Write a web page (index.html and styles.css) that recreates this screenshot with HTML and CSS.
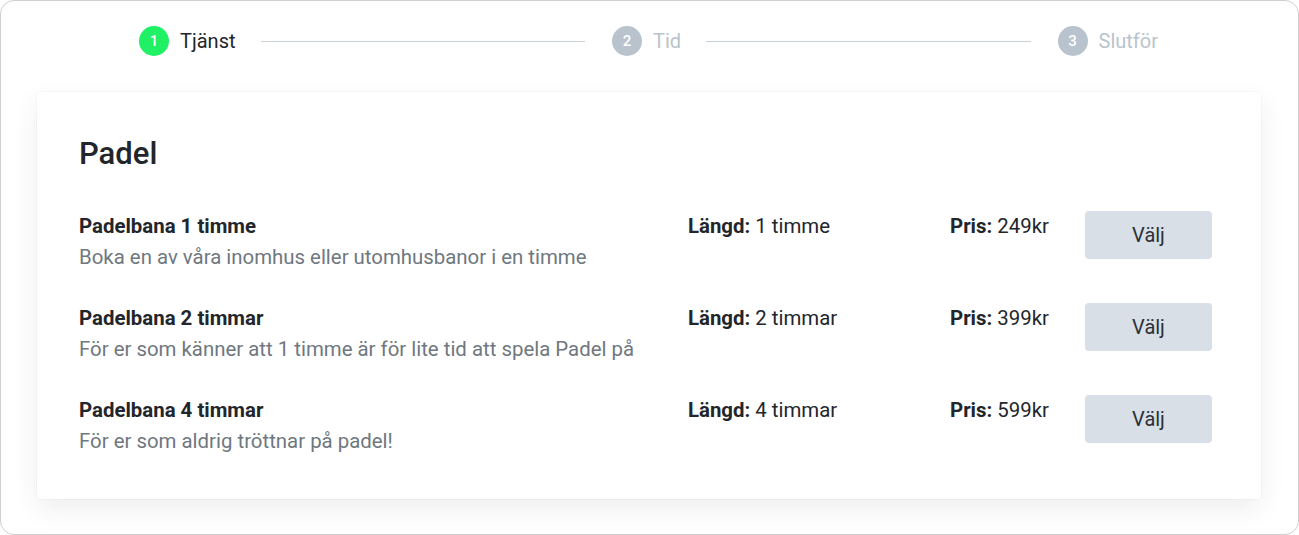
FILE: index.html
```html
<!DOCTYPE html>
<html>
<head>
	<title>Boka Padel</title>
	<link rel="stylesheet" href="styles.css">
</head>
<body>
	<div class="frame">
		<!-- Steps -->
		<div class="steps">
			<div class="step active"><span class="num">1</span><span class="label">Tjänst</span></div>
			<div class="line"></div>
			<div class="step"><span class="num">2</span><span class="label">Tid</span></div>
			<div class="line"></div>
			<div class="step"><span class="num">3</span><span class="label">Slutför</span></div>
		</div>

		<div class="card">
			<h2>Padel</h2>

			<div class="service">
				<div class="info">
					<div class="name">Padelbana 1 timme</div>
					<div class="desc">Boka en av våra inomhus eller utomhusbanor i en timme</div>
				</div>
				<div class="meta"><b>Längd:</b> 1 timme</div>
				<div class="meta"><b>Pris:</b> 249kr</div>
				<button class="pick">Välj</button>
			</div>

			<div class="service">
				<div class="info">
					<div class="name">Padelbana 2 timmar</div>
					<div class="desc">För er som känner att 1 timme är för lite tid att spela Padel på</div>
				</div>
				<div class="meta"><b>Längd:</b> 2 timmar</div>
				<div class="meta"><b>Pris:</b> 399kr</div>
				<button class="pick">Välj</button>
			</div>

			<div class="service">
				<div class="info">
					<div class="name">Padelbana 4 timmar</div>
					<div class="desc">För er som aldrig tröttnar på padel!</div>
				</div>
				<div class="meta"><b>Längd:</b> 4 timmar</div>
				<div class="meta"><b>Pris:</b> 599kr</div>
				<button class="pick">Välj</button>
			</div>
		</div>
	</div>
</body>
</html>
```

FILE: styles.css
```css
/* Base */
html, body {
	margin: 0;
	padding: 0;
	background: #fff;
}
body {
	font-family: Roboto, "Noto Sans", Arial, sans-serif;
	color: #22262b;
}
.frame {
	box-sizing: border-box;
	height: 535px;
	border: 1px solid #cfcfcf;
	border-radius: 14px;
	padding: 25px 37px 0 36px;
}

/* Steps */
.steps {
	display: flex;
	align-items: center;
	margin: 0 103px 0 102px;
	height: 30px;
}
.step {
	display: flex;
	align-items: center;
	gap: 11px;
}
.num {
	width: 30px;
	height: 30px;
	border-radius: 50%;
	background: #b9c3cd;
	color: #fff;
	font-size: 15px;
	font-weight: 500;
	display: flex;
	align-items: center;
	justify-content: center;
}
.label {
	font-size: 20px;
	color: #b9c3cd;
}
.step.active .num {
	background: #1ff064;
}
.step.active .label {
	color: #22262b;
}
.line {
	flex: 1;
	height: 1px;
	background: #c9d0d7;
	margin: 0 27px 0 25px;
}

/* Card */
.card {
	margin-top: 36px;
	background: #fff;
	border-radius: 4px;
	box-shadow: 0 0 0 1px rgba(0, 0, 0, 0.025), 0 10px 28px rgba(0, 0, 0, 0.07);
	padding: 46px 49px 43px 42px;
}
.card h2 {
	margin: 0 0 41px 0;
	font-size: 31px;
	font-weight: 500;
	line-height: 32px;
}
.service {
	display: grid;
	grid-template-columns: 609px 262px 135px 127px;
	align-items: start;
	margin-bottom: 31px;
	font-size: 20.4px;
	line-height: 30px;
}
.service:last-child {
	margin-bottom: 0;
}
.name {
	font-weight: 700;
	margin-bottom: 1px;
}
.desc {
	color: #6f7780;
}
.meta b {
	font-weight: 700;
}
.pick {
	height: 48px;
	border: none;
	border-radius: 4px;
	background: #d8dfe7;
	color: #2b3036;
	font-family: inherit;
	font-size: 20px;
	cursor: pointer;
}
.pick:hover {
	background: #cdd5de;
}
```
